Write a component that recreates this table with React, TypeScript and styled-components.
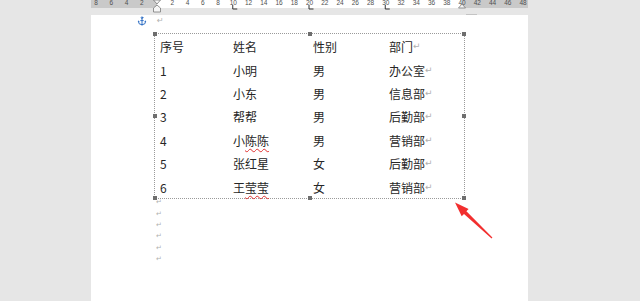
import React from "react";
import styled, { createGlobalStyle } from "styled-components";
import { Anchor } from "lucide-react";

const GlobalStyle = createGlobalStyle`
    html, body {
        margin: 0;
        padding: 0;
        background: #e6e6e6;
        overflow: hidden;
    }
`;

const Screen = styled.div`
    width: 640px;
    height: 301px;
    display: flex;
    flex-direction: column;
    background: #e6e6e6;
    font-family: "Noto Sans CJK SC", "Noto Sans", sans-serif;
`;

const RulerWrap = styled.div`
    margin-left: 91px;
    width: 437px;
    height: 15px;
    position: relative;
`;

const Page = styled.div`
    position: relative;
    margin-left: 91px;
    width: 437px;
    flex: 1;
    background: #ffffff;
    display: flex;
    flex-direction: column;
`;

const FirstLine = styled.div`
    display: flex;
    align-items: center;
    height: 12px;
    padding-left: 46px;
    gap: 10px;
    color: #2f6fc4;
`;

const Mark = styled.span<{ $size?: number }>`
    color: #b0b0b0;
    font-family: "DejaVu Sans", sans-serif;
    font-size: ${(p) => p.$size ?? 8}px;
    line-height: 1;
`;

const TableFrame = styled.div`
    position: relative;
    margin: 6px 0 0 63px;
    width: 311px;
    height: 166px;
    box-sizing: border-box;
    border: 1px dotted #9a9a9a;
    padding-top: 1px;
`;

const Grid = styled.div`
    display: grid;
    grid-template-columns: 73px 80px 76px 80px;
    grid-auto-rows: 23.4px;
`;

const Cell = styled.div`
    display: flex;
    align-items: center;
    padding-left: 5px;
    font-size: 12px;
    color: #262626;
    white-space: nowrap;
`;

const Wavy = styled.span`
    text-decoration: underline wavy #e03030;
    text-decoration-thickness: 1px;
    text-underline-offset: 2px;
`;

const Handle = styled.span<{ $x: string; $y: string }>`
    position: absolute;
    width: 4px;
    height: 4px;
    background: #6e6e6e;
    left: ${(p) => p.$x};
    top: ${(p) => p.$y};
    transform: translate(-50%, -50%);
`;

const EmptyLines = styled.div`
    display: flex;
    flex-direction: column;
    margin-top: -2px;
    padding-left: 65px;
`;

const EmptyLine = styled.div`
    height: 11.4px;
    display: flex;
    align-items: center;
`;

const ArrowSvg = styled.svg`
    position: absolute;
    left: 360px;
    top: 185px;
`;

const rows: Array<Array<React.ReactNode>> = [
    ["序号", "姓名", "性别", "部门"],
    ["1", "小明", "男", "办公室"],
    ["2", "小东", "男", "信息部"],
    ["3", "帮帮", "男", "后勤部"],
    ["4", <>小<Wavy>陈陈</Wavy></>, "男", "营销部"],
    ["5", "张红星", "女", "后勤部"],
    ["6", <>王<Wavy>莹莹</Wavy></>, "女", "营销部"],
];

const Ruler = () => {
    const zero = 66;
    const unit = 7.625;
    const labels: Array<{ x: number; t: string }> = [];
    for (let k = -8; k <= 48; k += 2) {
        if (k === 0) continue;
        labels.push({ x: zero + k * unit, t: String(Math.abs(k)) });
    }
    const tabs = [10, 20, 30];
    return (
        <svg width="437" height="15" style={{ display: "block" }}>
            <rect x="0" y="0" width="437" height="8" fill="#c9c9c9" />
            <rect x={zero} y="0" width={40 * unit} height="8" fill="#ffffff" />
            {labels.map((l) => (
                <text
                    key={l.x}
                    x={l.x}
                    y="5"
                    fontSize="6.5"
                    fill="#505050"
                    textAnchor="middle"
                    fontFamily="Liberation Sans, sans-serif"
                >
                    {l.t}
                </text>
            ))}
            {tabs.map((t) => (
                <path
                    key={t}
                    d={`M${zero + t * unit - 0.5} 5 V9 H${zero + t * unit + 4}`}
                    stroke="#333"
                    strokeWidth="1"
                    fill="none"
                />
            ))}
            <path
                d={`M${zero - 3.5} 0 H${zero + 3.5} L${zero} 4 Z M${zero} 5 L${zero + 3.5} 8 V12 H${zero - 3.5} V8 Z`}
                fill="#f6f6f6"
                stroke="#7a7a7a"
                strokeWidth="0.8"
            />
            <path
                d={`M${zero + 40 * unit} 4 L${zero + 40 * unit + 3.5} 8 H${zero + 40 * unit - 3.5} Z`}
                fill="#f6f6f6"
                stroke="#7a7a7a"
                strokeWidth="0.8"
            />
            <rect x="375" y="14" width="11" height="1.5" fill="#c4c4c4" />
        </svg>
    );
};

const App = () => {
    return (
        <Screen>
            <GlobalStyle />
            <RulerWrap>
                <Ruler />
            </RulerWrap>
            <Page>
                <FirstLine>
                    <Anchor size={10} strokeWidth={2.4} />
                    <Mark>↵</Mark>
                </FirstLine>
                <TableFrame>
                    <Grid>
                        {rows.map((row, i) =>
                            row.map((cell, j) => (
                                <Cell key={`c:${i}:${j}`}>
                                    {cell}
                                    {j === 3 && <Mark $size={9}>↵</Mark>}
                                </Cell>
                            ))
                        )}
                    </Grid>
                    <Handle $x="0" $y="0" />
                    <Handle $x="50%" $y="0" />
                    <Handle $x="100%" $y="0" />
                    <Handle $x="0" $y="50%" />
                    <Handle $x="100%" $y="50%" />
                    <Handle $x="0" $y="100%" />
                    <Handle $x="50%" $y="100%" />
                    <Handle $x="100%" $y="100%" />
                </TableFrame>
                <EmptyLines>
                    {[0, 1, 2, 3, 4, 5].map((i) => (
                        <EmptyLine key={i}>
                            <Mark $size={7}>↵</Mark>
                        </EmptyLine>
                    ))}
                </EmptyLines>
                <ArrowSvg width="45" height="45" viewBox="451 200 45 45">
                    <polygon
                        points="455,202.5 468.6,209 466.4,211.3 492.4,237.6 491.6,238.4 464,213.9 461.7,216.2"
                        fill="#f22f2f"
                    />
                </ArrowSvg>
            </Page>
        </Screen>
    );
};

export default App;
